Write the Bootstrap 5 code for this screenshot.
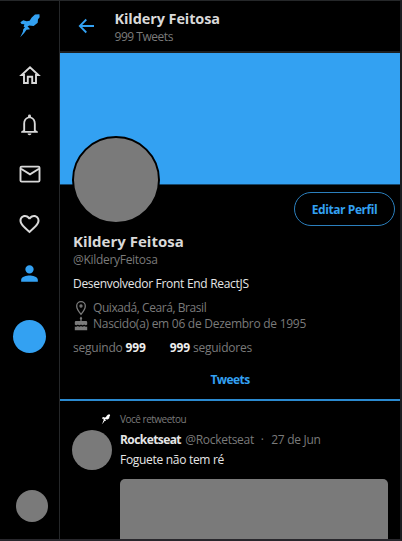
<!DOCTYPE html>
<html lang="pt-BR">
<head>
<meta charset="utf-8">
<meta name="viewport" content="width=device-width, initial-scale=1">
<title>Kildery Feitosa</title>
<link href="https://cdn.jsdelivr.net/npm/bootstrap@5.3.0/dist/css/bootstrap.min.css" rel="stylesheet">
<script defer src="https://cdn.jsdelivr.net/npm/bootstrap@5.3.0/dist/js/bootstrap.bundle.min.js"></script>
<style>
:root{--blue:#33a1f2;--grey:#7a7a7a;--line:#252729;--ink:#d9d9d9}
body{background:#000;color:var(--ink);font:12px/16px "Open Sans","Noto Sans",sans-serif;letter-spacing:-.3px;white-space:nowrap}
.frame{height:541px;border-top:1px solid #252729;border-right:2px solid #1b1c20;border-bottom:2px solid #28272c}
.side{width:60px;border-right:1px solid var(--line);padding:12px 0 17px}
.side a{height:24px;margin-bottom:25.7px;color:var(--ink);line-height:0}
.side a.on{color:var(--blue)}
.dot{width:33px;height:33px;border-radius:50%;background:var(--blue);margin-top:9px}
.me{width:32px;height:32px;margin-left:5px;border-radius:50%;background:var(--grey)}
.top{height:52px;padding:9px 0 0 16px;border-bottom:2px solid #1c1e20}
.top svg{margin:6px 17.5px 0 0;color:var(--blue)}
.top h1{font-size:14.5px;line-height:18px;font-weight:700;letter-spacing:-.1px;margin:0 0 1px}
.count{letter-spacing:-.47px}
.dim{color:var(--grey)}
.bright{color:#e6e6e6}
.cover{height:132px;background:var(--blue);border-bottom:1px solid #16466a}
.info{padding:7px 5px 0 13px}
.photo{width:88px;height:88px;border:2.5px solid #000;border-radius:50%;background:var(--grey);margin:-56px 0 0 -1px}
.edit,.edit:hover{width:101px;height:34px;border:1px solid #2b7fbd;border-radius:17px;color:var(--blue);font-size:12px;font-weight:700;letter-spacing:-.42px;padding:1px 0 0}
.info h2{font-size:15px;line-height:20px;font-weight:700;letter-spacing:0;margin:5px 0 1px}
.info b{letter-spacing:-.1px;color:#eee}
.meta svg{width:16px;height:16px;margin-right:4px}
.place{letter-spacing:-.43px}
.born{letter-spacing:-.27px}
.stats{column-gap:24px;letter-spacing:-.22px}
.tabline{height:45px;padding-top:16px;border-bottom:2px solid #2b8ad0;color:var(--blue);font-weight:700;letter-spacing:-.58px}
.tweet{margin:11px 0 0 4px}
.rt{font-size:10px;line-height:14px;letter-spacing:-.49px;padding-left:29px}
.cap{margin-left:9px}
.ava{width:40px;height:40px;border-radius:50%;background:var(--grey);margin:3.5px 8px 0 0}
.twt{padding-top:6px}
.nick{letter-spacing:-.58px;margin-right:1.5px}
.spot{margin:0 7.500px 0 7px}
.pic{height:80px;width:268px;border-radius:5px;background:var(--grey);margin-top:11px}
</style>
</head>
<body>
<svg class="d-none">
<symbol id="rocket" viewBox="0 0 24 27"><path fill="currentColor" d="M21.800 1.200 17.200 1.500 13.800 4.600 11.600 8 8.600 8.600 5 7.600 2 9.600 3.200 11.400 6.200 11.600 5.400 14.300 6.800 14.800 5 17 4.600 19.500 1.800 25.200 6 20.800 8.400 17.400 12 17 10.600 15 9.400 14 11.200 13 15.800 13.600 20 10.200 20.300 6.500 22 4.500Z"/></symbol>
</svg>
<div class="frame d-flex overflow-hidden">
  <nav class="side d-flex flex-column align-items-center flex-shrink-0">
    <a class="on"><svg width="24" height="26"><use href="#rocket"/></svg></a>
    <a><svg width="22" height="24" viewBox="0 0 22 24" fill="none" stroke="currentColor" stroke-width="1.900"><path d="M2.600 12H5v8h3.800v-6.200h4.400V20H17v-8h2.400L11 4.300Z"/></svg></a>
    <a><svg width="25" height="25" viewBox="0 0 24 24" fill="currentColor"><path d="M12 22.400c1 0 1.800-.8 1.800-1.700h-3.600c0 .9.800 1.700 1.800 1.700ZM18 17.500v-6.300c0-3.500-1.700-6-4.600-6.700V3.800a1.400 1.400 0 0 0-2.800 0v.7C7.700 5.200 6 7.700 6 11.200v6.300l-2 1.300V20h16v-1.200Zm-1.800.7H7.800v-7c0-3 1.600-5.100 4.200-5.100s4.200 2.100 4.200 5.100Z"/></svg></a>
    <a><svg width="24" height="24" viewBox="0 0 24 24" fill="none" stroke="currentColor" stroke-width="1.900"><rect x="2.500" y="4.600" width="19" height="15" rx="1.200"/><path d="m3 6.700 9 5.600 9-5.600"/></svg></a>
    <a><svg width="25" height="24" viewBox="0 0 24 24" fill="currentColor"><path d="M16.500 3c-1.740 0-3.410.81-4.500 2.090C10.910 3.810 9.240 3 7.500 3 4.420 3 2 5.420 2 8.500c0 3.780 3.400 6.860 8.550 11.540L12 21.350l1.450-1.320C18.600 15.360 22 12.280 22 8.500 22 5.420 19.580 3 16.500 3zm-4.400 15.550-.1.100-.1-.1C7.140 14.240 4 11.390 4 8.500 4 6.500 5.500 5 7.500 5c1.540 0 3.040.99 3.570 2.360h1.870C13.460 5.990 14.960 5 16.500 5c2 0 3.500 1.500 3.500 3.500 0 2.890-3.140 5.740-7.900 10.050z"/></svg></a>
    <a class="on"><svg width="25" height="25" viewBox="0 0 24 24" fill="currentColor"><path d="M12 12a4 4 0 1 0 0-8 4 4 0 0 0 0 8ZM12 14c-2.700 0-8 1.300-8 4v2h16v-2c0-2.700-5.300-4-8-4Z"/></svg></a>
    <div class="dot flex-shrink-0"></div>
    <div class="me mt-auto flex-shrink-0"></div>
  </nav>
  <main class="flex-grow-1 overflow-hidden">
    <header class="top d-flex">
      <svg width="21" height="20" viewBox="0 0 21 20" fill="none" stroke="currentColor" stroke-width="1.800"><path d="M18 10H3.800M10.300 3.500 3.800 10l6.500 6.500"/></svg>
      <div><h1>Kildery Feitosa</h1><div class="dim count">999 Tweets</div></div>
    </header>
    <div class="cover"></div>
    <section class="info">
      <div class="d-flex justify-content-between align-items-start">
        <div class="photo position-relative"></div>
        <button class="edit btn">Editar Perfil</button>
      </div>
      <h2>Kildery Feitosa</h2>
      <div class="dim">@KilderyFeitosa</div>
      <div class="bright mt-2">Desenvolvedor Front End ReactJS</div>
      <div class="meta dim mt-2">
        <div class="d-flex place"><svg viewBox="0 0 16 16" fill="none" stroke="currentColor" stroke-width="1.300"><path d="M8 14.200C5.300 11.200 3.700 8.600 3.700 6a4.300 4.300 0 0 1 8.600 0c0 2.600-1.600 5.200-4.300 8.200Z"/><circle cx="8" cy="6" r="1"/></svg>Quixadá, Ceará, Brasil</div>
        <div class="d-flex born"><svg viewBox="0 0 16 16" fill="currentColor"><path d="M7.400 5V3.500C6.300 2.900 6.800 1.900 8 .5c1.200 1.400 1.700 2.400.6 3V5H13q1.200 0 1.200 1.200v2.400q-1.500 1.500-3.100 0-1.500 1.500-3.100 0-1.600 1.500-3.100 0-1.600 1.500-3.100 0V6.200Q1.800 5 3 5ZM1.800 10.500q1.700.6 3.100-.4 1.600 1.200 3.100 0 1.500 1.200 3.100 0 1.400 1 3.100.4v3.700H1.800Z"/></svg>Nascido(a) em 06 de Dezembro de 1995</div>
      </div>
      <div class="stats d-flex mt-2 dim"><span>seguindo <b>999</b></span><span><b>999</b> seguidores</span></div>
    </section>
    <div class="tabline text-center">Tweets</div>
    <article class="tweet px-2">
      <div class="rt dim d-flex align-items-center"><svg class="text-white" width="10" height="11"><use href="#rocket"/></svg><span class="cap">Você retweetou</span></div>
      <div class="d-flex">
        <div class="ava flex-shrink-0"></div>
        <div class="twt">
          <div class="dim"><b class="bright nick">Rocketseat</b> @Rocketseat<span class="spot">·</span>27 de Jun</div>
          <div class="bright mt-1">Foguete não tem ré</div>
          <div class="pic"></div>
        </div>
      </div>
    </article>
  </main>
</div>
</body>
</html>
